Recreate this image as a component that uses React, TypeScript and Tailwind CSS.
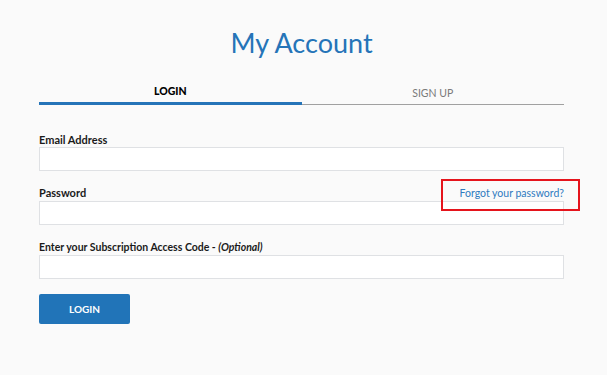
import { useState } from "react";

export default function App() {
  const [tab, setTab] = useState<"login" | "signup">("login");

  const inputCls =
    "block w-full h-[24px] bg-white border border-[#dfe1e4] outline-none px-2 text-[12px]";

  return (
    <div
      className="relative min-h-[375px] bg-[#fafafa] text-[#1a1a1a]"
      style={{ fontFamily: "Lato, 'Open Sans', sans-serif" }}
    >
      <div className="ml-[39px] w-[525px] pt-[24px]">
        {/* ── Title ─────────────────────────── */}
        <h1 className="text-center text-[27px] leading-[38px] text-[#2574b8] font-normal">
          My Account
        </h1>

        {/* ── Tabs ──────────────────────────── */}
        <div className="mt-[22px] flex">
          <button
            onClick={() => setTab("login")}
            className={`flex-1 pb-[4px] text-[10.5px] uppercase leading-[14px] ${
              tab === "login"
                ? "font-black text-black border-b-[3px] border-[#2574b8]"
                : "text-[#777] border-b-[3px] border-transparent"
            }`}
          >
            Login
          </button>
          <button
            onClick={() => setTab("signup")}
            className={`relative flex-1 pb-[4px] text-[10.5px] uppercase leading-[14px] ${
              tab === "signup" ? "font-black text-black" : "text-[#7a7a7a]"
            }`}
          >
            Sign Up
            <span className="absolute left-0 right-0 bottom-0 h-[1.5px] bg-[#a0a0a0]" />
          </button>
        </div>

        {/* ── Form ──────────────────────────── */}
        <form className="mt-[28px] flex flex-col" onSubmit={(e) => e.preventDefault()}>
          <label className="text-[11px] font-bold leading-[14px]">Email Address</label>
          <input type="email" className={inputCls} />

          <div className="mt-[15px] mb-[1px] flex items-end justify-between leading-[14px]">
            <label className="text-[11px] font-bold">Password</label>
            <a href="#" className="text-[10.5px] text-[#2f7bbf]">
              Forgot your password?
            </a>
          </div>
          <input type="password" className={inputCls} />

          <label className="mt-[15px] mb-[1px] text-[10.5px] font-bold leading-[14px]">
            Enter your Subscription Access Code - <i>(Optional)</i>
          </label>
          <input type="text" className={inputCls} />

          <button
            type="submit"
            className="mt-[15px] w-[91px] h-[30px] rounded-[2px] bg-[#2174b8] text-white text-[10px] font-bold uppercase"
          >
            Login
          </button>
        </form>
      </div>

      {/* red annotation box */}
      <div className="pointer-events-none absolute left-[441px] top-[179px] w-[139px] h-[32px] border-2 border-[#e5141c]" />
    </div>
  );
}
